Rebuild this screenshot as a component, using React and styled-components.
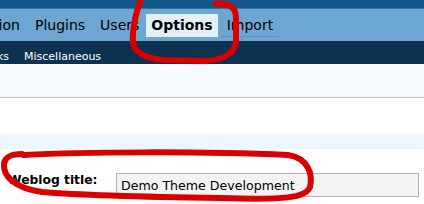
import React from "react";
import styled, { createGlobalStyle } from "styled-components";

const Global = createGlobalStyle`
  html, body { margin: 0; padding: 0; background: #fff; }
  body { font-family: "DejaVu Sans", Verdana, sans-serif; }
`;

const Page = styled.div`
  position: relative;
  width: 424px;
  height: 204px;
  overflow: hidden;
  background: #fff;
`;

const Head = styled.div`
  height: 8px;
  background: #14568a;
  border-bottom: 1px solid #2f72a8;
`;

const MenuBar = styled.ul`
  display: flex;
  gap: 3px;
  list-style: none;
  margin: 0;
  padding: 5px 0 0 0;
  height: 27px;
  background: #6da6d1;
  white-space: nowrap;
`;

const MenuItem = styled.li`
  flex: none;
  height: 23px;
  box-sizing: border-box;
  padding: ${(p) => (p.$current ? "0 5px" : "0 6px")};
  line-height: 23px;
  font-size: 14px;
  color: #000;
  font-weight: ${(p) => (p.$current ? "bold" : "normal")};
  background: ${(p) => (p.$current ? "#e3f0fa" : "transparent")};
  border-bottom: ${(p) => (p.$underline ? "1px solid #5c93c0" : "none")};
  margin-left: ${(p) => (p.$offset ? `${p.$offset}px` : "0")};
`;

const SubMenu = styled.ul`
  display: flex;
  gap: 1px;
  list-style: none;
  margin: 0;
  padding: 9px 0 1px 0;
  height: 13px;
  background: #0d324f;
  white-space: nowrap;
`;

const SubItem = styled.li`
  flex: none;
  padding: 0 7px;
  font-size: 11px;
  line-height: 13px;
  color: #fff;
  margin-left: ${(p) => (p.$offset ? `${p.$offset}px` : "0")};
`;

const Notice = styled.div`
  height: 33px;
  background: #f6faff;
  border-bottom: 1px solid #bfbfbf;
`;

const Gap = styled.div`
  height: ${(p) => p.$h}px;
  background: ${(p) => p.$bg || "#fff"};
`;

const FormRow = styled.div`
  display: flex;
  align-items: flex-start;
  padding: 24px 0 0 8px;
`;

const Label = styled.label`
  flex: none;
  width: 108px;
  font-size: 12.3px;
  line-height: 14px;
  font-weight: bold;
  color: #000;
`;

const TextInput = styled.input`
  flex: none;
  width: 303px;
  height: 24px;
  box-sizing: border-box;
  margin: 0;
  padding: 0 4px;
  border: 1px solid #b4b4b4;
  background: #f3f3f3;
  font-family: "DejaVu Sans", Verdana, sans-serif;
  font-size: 12.6px;
  color: #000;
  outline: none;
`;

const Marks = styled.svg`
  position: absolute;
  left: 0;
  top: 0;
  width: 424px;
  height: 204px;
  pointer-events: none;
`;

export default function App() {
  return (
    <>
      <Global />
      <Page>
        <Head />
        <MenuBar>
          <MenuItem $offset={-74}>Presentation</MenuItem>
          <MenuItem>Plugins</MenuItem>
          <MenuItem>Users</MenuItem>
          <MenuItem $current $offset={-2}>Options</MenuItem>
          <MenuItem $underline>Import</MenuItem>
        </MenuBar>
        <SubMenu>
          <SubItem $offset={-58}>Permalinks</SubItem>
          <SubItem>Miscellaneous</SubItem>
        </SubMenu>
        <Notice />
        <Gap $h={36} />
        <Gap $h={15} $bg="#eef6fd" />
        <FormRow>
          <Label htmlFor="blogname">Weblog title:</Label>
          <TextInput id="blogname" readOnly value="Demo Theme Development" />
        </FormRow>
        <Marks viewBox="0 0 424 204">
          <path
            d="M 216 4 C 228 3, 236 6, 236 18 L 236 40 C 236 52, 225 60, 205 61 L 165 60 C 145 59, 134 52, 133 42 C 132 30, 136 12, 142 -4"
            fill="none"
            stroke="#da0000"
            strokeWidth="6"
            strokeLinecap="round"
            strokeLinejoin="round"
          />
          <path
            d="M 24 155 C 80 152, 200 151, 288 155 C 308 158, 313 174, 310 187 C 306 198, 285 200, 220 198 C 150 197, 90 196, 42 192 C 14 188, 3 176, 4 164 C 5 157, 10 154, 22 154"
            fill="none"
            stroke="#da0000"
            strokeWidth="6"
            strokeLinecap="round"
            strokeLinejoin="round"
          />
        </Marks>
      </Page>
    </>
  );
}
